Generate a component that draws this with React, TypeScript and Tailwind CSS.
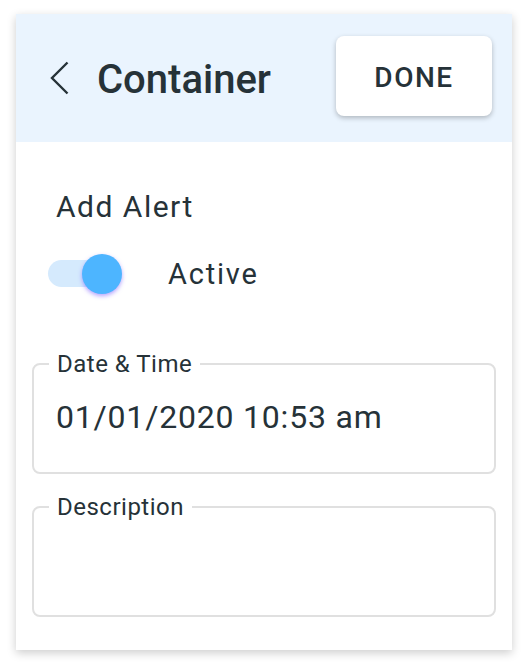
import { useState } from "react";

const ink = "text-[#263238]";

const Field = ({ label, value }: { label: string; value?: string }) => (
  <fieldset className="h-[124px] rounded-[8px] border-2 border-[#e0e0e0] px-[22px]">
    <legend className={`ml-[-7px] px-[8px] text-[24px] leading-[28px] tracking-[0.5px] ${ink}`}>
      {label}
    </legend>
    {value && (
      <div className={`mt-[19px] text-[32px] leading-[40px] tracking-[0.8px] ${ink}`}>
        {value}
      </div>
    )}
  </fieldset>
);

const App = () => {
  const [active, setActive] = useState(true);

  return (
    <div className="min-h-screen bg-white pt-[14px] font-['Roboto',sans-serif]">
      <div className="mx-[16px] h-[636px] w-[496px] bg-white shadow-[0_3px_9px_rgba(0,0,0,0.2)]">
        <div className="flex h-[128px] items-center justify-between bg-[#eaf4fe] pl-[34px] pr-[20px]">
          <div className="flex items-center gap-[28px]">
            <svg width="19" height="34" viewBox="0 0 19 34" className="text-[#263238]">
              <path d="M17.5 1.5 L2 17 L17.5 32.5" fill="none" stroke="currentColor" strokeWidth="2.4" />
            </svg>
            <h1 className={`mt-[3px] text-[40px] font-medium leading-[48px] ${ink}`}>Container</h1>
          </div>
          <button className={`-mt-[4px] h-[80px] w-[156px] rounded-[8px] bg-white pt-[3px] text-[28px] font-medium tracking-[1.5px] shadow-[0_2px_5px_rgba(0,0,0,0.25)] ${ink}`}>
            DONE
          </button>
        </div>

        <div className="px-[16px] pt-[47px]">
          <p className={`pl-[24px] text-[30px] leading-[36px] tracking-[1.5px] ${ink}`}>Add Alert</p>

          <div className="mt-[29px] flex items-center gap-[46px] pl-[16px]">
            <button
              onClick={() => setActive(!active)}
              className="relative h-[40px] w-[74px]"
              aria-label="Active"
            >
              <span className="absolute left-0 top-[6px] h-[27px] w-[66px] rounded-full bg-[#d5eafd]" />
              <span
                className={`absolute top-0 h-[40px] w-[40px] rounded-full bg-[#4db5ff] shadow-[0_2px_4px_rgba(120,90,255,0.55)] ${
                  active ? "left-[34px]" : "left-0"
                }`}
              />
            </button>
            <span className={`text-[29px] leading-[36px] tracking-[1.8px] ${ink}`}>Active</span>
          </div>

          <div className="mt-[56px] flex flex-col gap-[19px]">
            <Field label="Date & Time" value="01/01/2020 10:53 am" />
            <Field label="Description" />
          </div>
        </div>
      </div>
    </div>
  );
};

export default App;
